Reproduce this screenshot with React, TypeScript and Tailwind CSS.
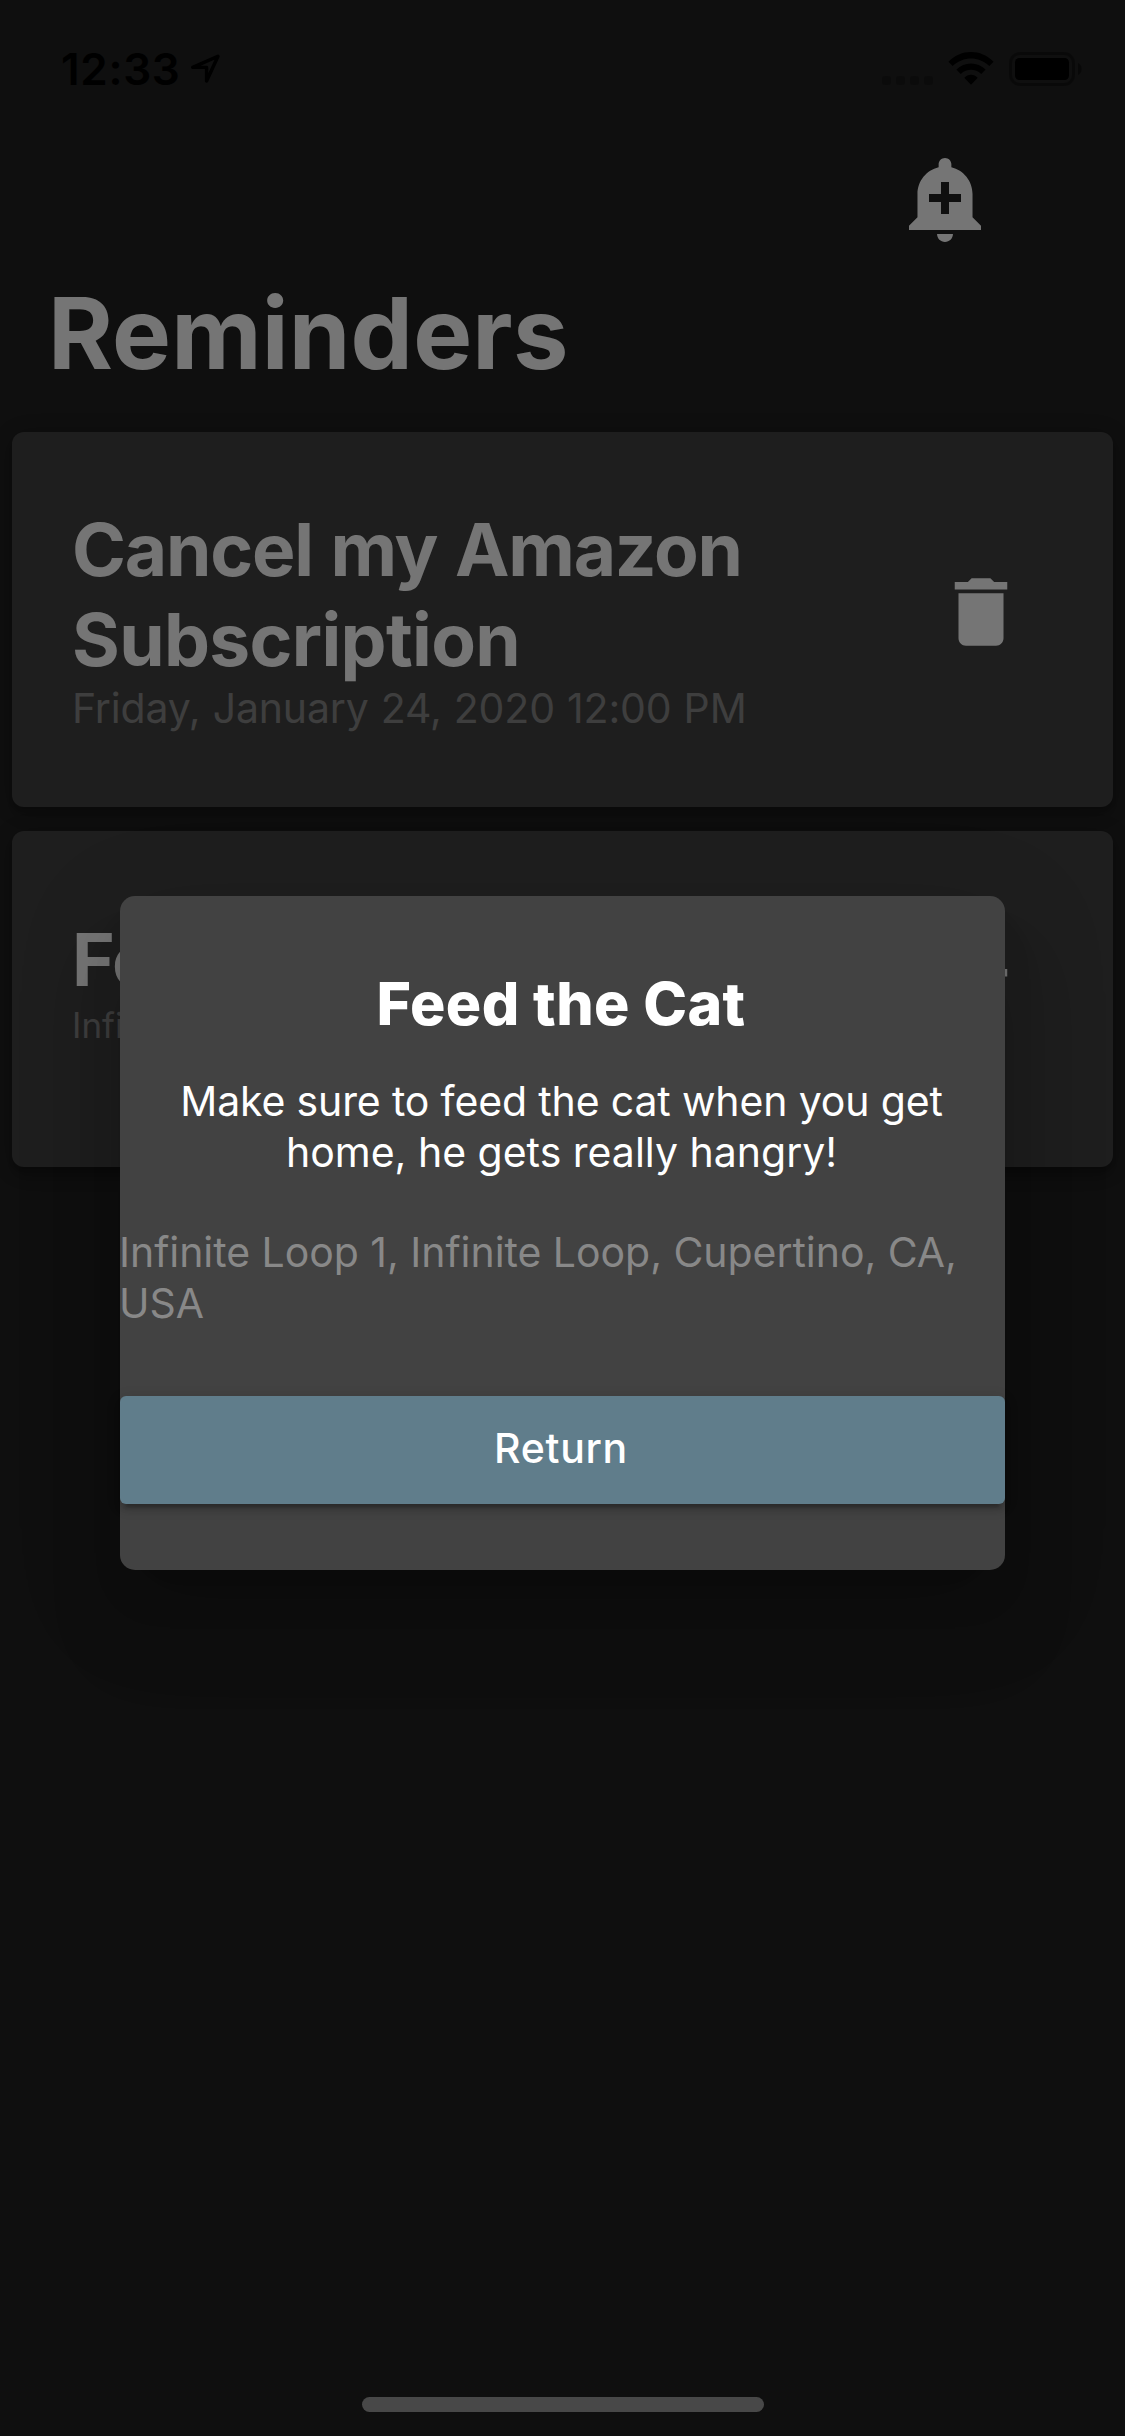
function StatusBar() {
  return (
    <div className="flex h-[132px] items-start justify-between pl-[61px] pr-[42px] text-black">
      <div className="flex items-start pt-[47px]">
        <span className="w-[119px] whitespace-nowrap text-[44px] font-semibold leading-[44px] tracking-[0.7px]">12:33</span>
        <svg className="ml-[10px] mt-[6px] h-[32px] w-[32px]" viewBox="0 0 32 32" fill="none">
          <path d="M28 3.2 L2.7 14.4 H16.6 V28 Z" stroke="currentColor" strokeWidth="3.4" strokeLinejoin="round" />
        </svg>
      </div>
      <div className="flex h-[34px] translate-y-[52px] items-start">
        <div className="mr-[15px] mt-6 flex gap-[5px]">
          <span className="h-[9px] w-[9px] rounded-[3px] bg-black/20" />
          <span className="h-[9px] w-[9px] rounded-[3px] bg-black/20" />
          <span className="h-[9px] w-[9px] rounded-[3px] bg-black/20" />
          <span className="h-[9px] w-[9px] rounded-[3px] bg-black/20" />
        </div>
        <svg className="mr-[15px] h-[34px] w-[46px]" viewBox="0 0 46 34" fill="currentColor">
          <path d="M0.5 9.7 C13 -3.2 33 -3.2 45.5 9.7 L41.3 14 C31 3.9 15 3.9 4.7 14 Z" />
          <path d="M8.4 17.6 C16.5 9.3 29.5 9.3 37.6 17.6 L33.2 22 C27.5 16.4 18.5 16.4 12.8 22 Z" />
          <path d="M16.3 25.7 C20 21.7 26 21.7 29.7 25.7 L23 32.8 Z" />
        </svg>
        <svg className="h-[34px] w-[74px]" viewBox="0 0 74 34">
          <rect x="1.5" y="1.5" width="63" height="31" rx="9.5" fill="none" stroke="black" strokeOpacity="0.35" strokeWidth="3" />
          <rect x="6" y="6" width="54" height="22" rx="4.5" fill="black" />
          <path d="M69 11 C73.8 12.7 73.8 21.3 69 23 Z" fill="black" fillOpacity="0.4" />
        </svg>
      </div>
    </div>
  );
}

function AddAlertIcon() {
  return (
    <svg className="h-24 w-24" viewBox="0 0 24 24" fill="currentColor">
      <path d="M10.01 21.01c0 1.1.89 1.99 1.99 1.99s1.99-.89 1.99-1.99h-3.98zm8.87-4.19V11c0-3.25-2.25-5.97-5.29-6.69v-.72C13.59 2.71 12.88 2 12 2s-1.59.71-1.59 1.59v.72C7.37 5.03 5.12 7.75 5.12 11v5.82L3 18.94V20h18v-1.06l-2.12-2.12zM16 13.01h-3v3h-2v-3H8V11h3V8h2v3h3v2.01z" />
    </svg>
  );
}

function TrashIcon() {
  return (
    <svg className="h-[90px] w-[90px] shrink-0" viewBox="0 0 24 24" fill="currentColor">
      <path d="M6 19c0 1.1.9 2 2 2h8c1.1 0 2-.9 2-2V7H6v12zM19 4h-3.5l-1-1h-5l-1 1H5v2h14V4z" />
    </svg>
  );
}

const cardClass =
  "flex justify-between rounded-xl bg-[#424242] pl-[60px] pr-[87px] shadow-[0_6px_6px_-3px_rgba(0,0,0,0.2),0_9px_15px_0_rgba(0,0,0,0.14),0_3px_24px_0_rgba(0,0,0,0.12)]";

export default function App() {
  return (
    <div className="relative flex h-[2436px] w-[1125px] flex-col overflow-hidden bg-[#212121] font-['Inter',sans-serif] text-white">
      <StatusBar />
      <header className="flex h-[300px] flex-col pt-[18px]">
        <div className="flex justify-end pr-[132px]">
          <AddAlertIcon />
        </div>
        <h1 className="mt-[27px] pl-[48px] text-[99px] font-bold leading-[120px] tracking-[0.2px]">Reminders</h1>
      </header>

      <main className="flex flex-1 flex-col gap-6 px-3">
        <article className={`${cardClass} h-[375px]`}>
          <div className="pt-[73px]">
            <h2 className="text-[73px] font-bold leading-[90px]">
              <span className="block whitespace-nowrap tracking-[-1.2px] [word-spacing:1.5px]">Cancel my Amazon</span>
              <span className="block tracking-[-0.65px]">Subscription</span>
            </h2>
            <p className="whitespace-nowrap text-[41px] leading-[46px] tracking-[-0.15px] text-[#888888] [word-spacing:0.75px]">
              Friday, January 24, 2020 12:00 PM
            </p>
          </div>
          <div className="pt-[135px]">
            <TrashIcon />
          </div>
        </article>
        <article className={`${cardClass} h-[336px]`}>
          <div className="pt-[84px]">
            <h2 className="text-[73px] font-bold leading-[90px] tracking-[-0.8px]">Feed the Cat</h2>
            <p className="text-[35px] leading-[41px] text-[#888888]">Infinite Loop 1</p>
          </div>
          <div className="pt-[123px]">
            <TrashIcon />
          </div>
        </article>
      </main>

      <div className="mb-6 ml-[362px] h-[15px] w-[402px] rounded-full bg-[#9d9d9d]" />

      <div className="absolute inset-0 bg-black/54 px-[120px] pt-[896px]">
        <section
          role="dialog"
          className="flex h-[674px] flex-col rounded-[15px] bg-[#424242] pt-[71px] shadow-[0_33px_45px_-21px_rgba(0,0,0,0.2),0_72px_72px_9px_rgba(0,0,0,0.08),0_27px_100px_12px_rgba(0,0,0,0.12)]"
        >
          <h3 className="pr-[3px] text-center text-[59px] font-extrabold leading-[73px] tracking-[0.4px]">Feed the Cat</h3>
          <p className="mt-9 pr-[2px] text-center text-[41px] leading-[51px]">
            <span className="block whitespace-nowrap tracking-[-0.15px]">Make sure to feed the cat when you get</span>
            <span className="block whitespace-nowrap">home, he gets really hangry!</span>
          </p>
          <p className="-ml-px mt-[49px] text-[41px] leading-[51px] tracking-[-0.04px] text-[#888888]">
            Infinite Loop 1, Infinite Loop, Cupertino, CA, USA
          </p>
          <button className="mt-[67px] h-[108px] rounded-md bg-[#607d8b] pb-[2px] pr-[3px] text-[41px] font-medium tracking-[0.7px] shadow-[0_9px_3px_-6px_rgba(0,0,0,0.2),0_6px_6px_0_rgba(0,0,0,0.14),0_3px_15px_0_rgba(0,0,0,0.12)]">
            Return
          </button>
        </section>
      </div>
    </div>
  );
}
